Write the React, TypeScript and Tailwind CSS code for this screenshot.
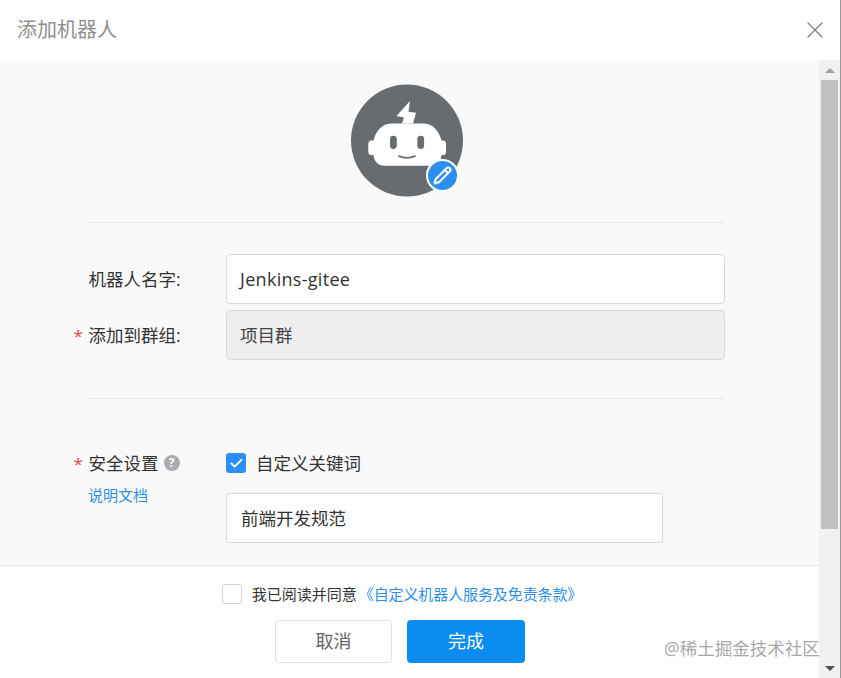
import { Check, Pencil, X } from "lucide-react";

function RobotAvatar() {
  return (
    <div className="relative h-[113px] w-[113px]">
      <svg viewBox="0 0 113 113" className="h-[113px] w-[113px]">
        <circle cx="56" cy="56.5" r="56" fill="#676c71" />
        <path d="M59 17 L45.5 32 L53 33.5 L51 39.5 L62 39.5 L65 28.7 L57.5 27.7 Z" fill="#fff" />
        <path
          d="M41 39.5 H72 C82 39.5 88 47 90.5 56.5 H92.5 C94 56.5 95 58 95 59.5 V68 C95 70 94 71 92.5 71 H90.5 C90 77 86 81.7 80 81.7 H33 C27 81.7 23 77 22.5 71 H20 C18.5 71 17.3 70 17.3 68 V59.5 C17.3 58 18.5 56.5 20 56.5 H22.5 C25 47 31 39.5 41 39.5 Z"
          fill="#fff"
        />
        <rect x="39" y="51.7" width="6.8" height="13.3" rx="3.4" fill="#676c71" />
        <rect x="66.3" y="51.7" width="6.8" height="13.3" rx="3.4" fill="#676c71" />
        <path d="M48 72.2 Q56 75.5 64 72.2" fill="none" stroke="#676c71" strokeWidth="1.8" strokeLinecap="round" />
      </svg>
      <div className="absolute left-[75px] top-[75px] flex h-[33px] w-[33px] items-center justify-center rounded-full border-2 border-white bg-[#2b8ff0]">
        <Pencil size={19} strokeWidth={2.6} className="text-white" />
      </div>
    </div>
  );
}

function Label({ text, required }: { text: string; required?: boolean }) {
  return (
    <span className="relative ml-[0.5px] text-[17.5px] leading-[24px] text-[#333]">
      {required && (
        <span className="absolute left-[-15px] top-[1px] text-[17px] text-[#ee4450]">*</span>
      )}
      {text}
    </span>
  );
}

export default function App() {
  return (
    <div
      className="relative flex h-[678px] w-[841px] flex-col overflow-hidden border-r border-[#9a9a9a] bg-white"
      style={{ fontFamily: '"Open Sans", "Noto Sans CJK SC", sans-serif' }}
    >
      <div className="flex h-[60px] items-center justify-between pl-[17px] pr-[11px]">
        <h1 className="text-[20px] font-normal text-[#8f8f8f]">添加机器人</h1>
        <X size={28} strokeWidth={1.1} className="text-[#808080]" />
      </div>

      <div className="flex min-h-0 flex-1">
        <div className="flex min-w-0 flex-1 flex-col">
          <div className="h-[506px] overflow-hidden border-b border-[#e5e5e5] bg-[#f9f9f9] pl-[88px] pr-[94px]">
            <div className="flex justify-center pl-[1px] pt-[24px] pb-[25px]">
              <RobotAvatar />
            </div>
            <div className="border-t border-[#e6e6e6] pt-[31px]">
              <div className="flex items-center">
                <div className="w-[138px]">
                  <Label text="机器人名字:" />
                </div>
                <div className="flex h-[50px] flex-1 items-center rounded-[4px] border border-[#d9d9d9] bg-white px-[13px] text-[18px] tracking-[0.3px] text-[#333]">
                  Jenkins-gitee
                </div>
              </div>
              <div className="mt-[6px] flex items-center">
                <div className="w-[138px]">
                  <Label text="添加到群组:" required />
                </div>
                <div className="flex h-[50px] flex-1 items-center rounded-[4px] border border-[#d9d9d9] bg-[#efefef] px-[13px] text-[17.5px] text-[#444]">
                  项目群
                </div>
              </div>
            </div>
            <div className="mt-[38px] border-t border-[#e6e6e6] pt-[52px]">
              <div className="flex">
                <div className="w-[138px]">
                  <div className="flex items-center gap-[5px]">
                    <Label text="安全设置" required />
                    <span className="flex h-[16px] w-[16px] items-center justify-center rounded-full bg-[#a9adb0] text-[12px] font-bold leading-none text-white">
                      ?
                    </span>
                  </div>
                  <a className="mt-[10px] block text-[15px] leading-[20px] text-[#2e8fe6]">说明文档</a>
                </div>
                <div className="flex-1">
                  <div className="flex items-center gap-[10px]">
                    <span className="flex h-[20px] w-[20px] items-center justify-center rounded-[3px] bg-[#2a8ff7]">
                      <Check size={15} strokeWidth={3} className="text-white" />
                    </span>
                    <span className="text-[17.5px] leading-[24px] text-[#333]">自定义关键词</span>
                  </div>
                  <div className="mt-[18px] flex h-[50px] w-[437px] items-center rounded-[3px] border border-[#d9d9d9] bg-white px-[14px] text-[17.5px] text-[#333]">
                    前端开发规范
                  </div>
                </div>
              </div>
            </div>
          </div>

          <div className="flex flex-1 flex-col items-center bg-white pr-[19px] pt-[17px]">
            <div className="ml-[4px] flex items-center">
              <span className="mr-[10px] h-[20px] w-[20px] rounded-[3px] border border-[#d5d5d5] bg-white" />
              <span className="text-[15px] text-[#333]">我已阅读并同意</span>
              <a className="ml-[2px] text-[15px] tracking-[-0.1px] text-[#2e8fe6]">《自定义机器人服务及免责条款》</a>
            </div>
            <div className="mt-[14px] flex gap-[15px]">
              <button className="h-[43px] w-[117px] rounded-[4px] border border-[#e0e0e0] bg-white text-[18px] text-[#666]">
                取消
              </button>
              <button className="h-[43px] w-[118px] rounded-[4px] bg-[#0a8cf0] text-[18px] text-white">
                完成
              </button>
            </div>
          </div>
        </div>

        <div className="flex w-[21px] flex-col bg-[#f1f1f1]">
          <div className="flex h-[20px] items-center justify-center">
            <div className="h-0 w-0 border-x-[5px] border-b-[5px] border-x-transparent border-b-[#a3a3a3]" />
          </div>
          <div className="ml-[2px] h-[449px] w-[17px] bg-[#c1c1c1]" />
          <div className="flex-1" />
          <div className="flex h-[20px] items-center justify-center">
            <div className="h-0 w-0 border-x-[5px] border-t-[5px] border-x-transparent border-t-[#505050]" />
          </div>
        </div>
      </div>

      <span className="absolute left-[664px] top-[636px] text-[17.5px] leading-[24px] text-[#a0a0a0] opacity-90">
        @稀土掘金技术社区
      </span>
    </div>
  );
}
